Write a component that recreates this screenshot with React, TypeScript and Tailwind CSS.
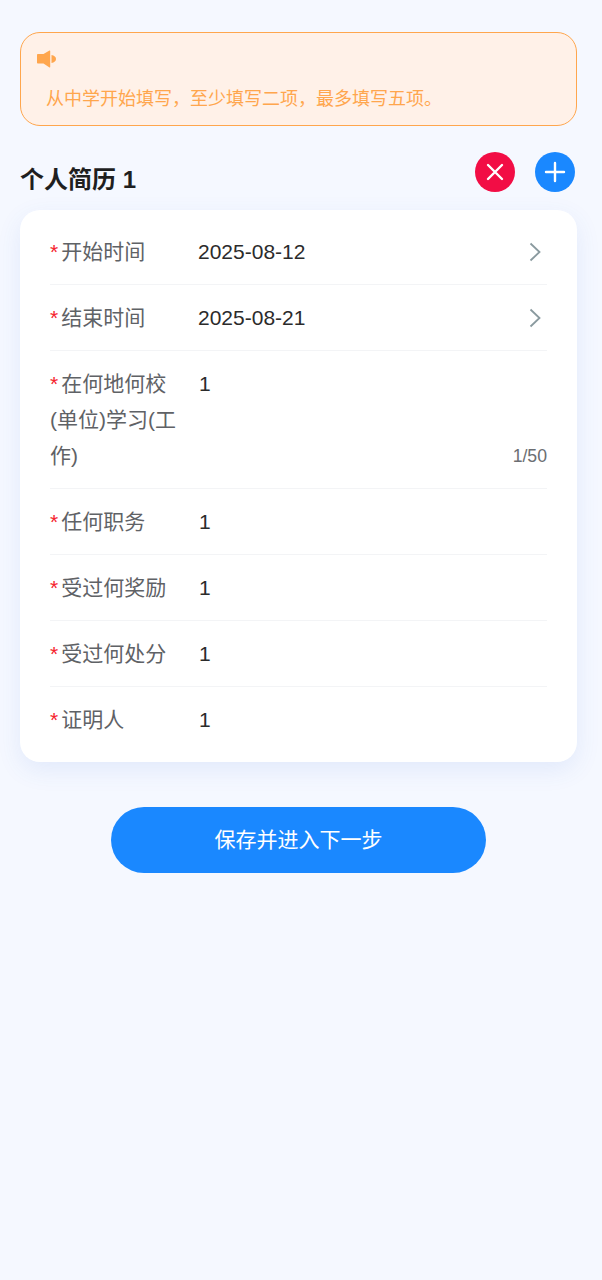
type Field = {
  label: string;
  value: string;
  arrow?: boolean;
  counter?: string;
};

const fields: Field[] = [
  { label: "开始时间", value: "2025-08-12", arrow: true },
  { label: "结束时间", value: "2025-08-21", arrow: true },
  { label: "在何地何校(单位)学习(工作)", value: "1", counter: "1/50" },
  { label: "任何职务", value: "1" },
  { label: "受过何奖励", value: "1" },
  { label: "受过何处分", value: "1" },
  { label: "证明人", value: "1" },
];

const fontStack = "font-['Liberation_Sans','Noto_Sans_CJK_SC',sans-serif]";

function FieldRow({ field, last }: { field: Field; last: boolean }) {
  return (
    <div className={`flex pt-[15px] ${last ? "pb-[15px]" : "border-b border-[#f3f4f6] pb-[14px]"}`}>
      <div className="w-[148px] shrink-0 pr-[18px] text-[21px] leading-[36px] text-[#5f6266]">
        <span className="mr-[3px] text-[#f5222d]">*</span>
        {field.label}
      </div>
      <div className="relative flex min-w-0 flex-1 items-start justify-between pl-[1px] text-[21px] leading-[36px] text-[#2b2b2b]">
        <span className={field.arrow ? "-ml-[1px]" : ""}>{field.value}</span>
        {field.arrow && (
          <svg width="12" height="20" viewBox="0 0 12 20" fill="none" className="mt-[8px] mr-[6px] text-[#8a9a9f]">
            <path d="M1.500 1.500L10.500 10L1.500 18.500" stroke="currentColor" strokeWidth="1.800" />
          </svg>
        )}
        {field.counter && (
          <span className="absolute right-0 bottom-0 text-[17.66px] text-[#6b6e72]">{field.counter}</span>
        )}
      </div>
    </div>
  );
}

export default function App() {
  return (
    <div className={`min-h-[1280px] bg-[#f5f8ff] px-[20px] pt-[32px] pr-[25px] ${fontStack}`}>
      {/* Notice */}
      <div className="h-[94px] rounded-[20px] border border-[#ffa64d] bg-[#fff1e8] pt-[8px] pl-[16px]">
        <svg width="20" height="20" viewBox="0 0 20 20" className="mt-[9px]">
          <path d="M1 4h5.500L12.500 0.500c.4-.2.7 0 .7.4v16.200c0 .4-.3.6-.7.4L6.500 13.500H1c-.5 0-1-.4-1-1V5c0-.6.5-1 1-1z" fill="#ffa64d" />
          <path d="M14.500 5c2.800.4 4.500 2 4.500 4s-1.700 3.600-4.500 4z" fill="#ffa64d" />
        </svg>
        <p className="mt-[15px] pl-[9px] text-[18px] leading-[28px] text-[#ffa64d]">
          从中学开始填写，至少填写二项，最多填写五项。
        </p>
      </div>

      {/* Section heading */}
      <div className="mt-[26px] flex h-[52px] items-start justify-between">
        <h2 className="mt-[12px] text-[24px] leading-[32px] font-bold text-[#1f1f1f]">个人简历 1</h2>
        <div className="mr-[2.4px] flex gap-[20px]">
          <button className="flex h-[40px] w-[40px] items-center justify-center rounded-full bg-[#f20d45]">
            <svg width="20" height="20" viewBox="0 0 20 20" stroke="#fff" strokeWidth="2.400" strokeLinecap="round">
              <path d="M3 3l14 14M17 3L3 17" />
            </svg>
          </button>
          <button className="flex h-[40px] w-[40px] items-center justify-center rounded-full bg-[#1a88ff]">
            <svg width="22" height="22" viewBox="0 0 22 22" stroke="#fff" strokeWidth="2.400" strokeLinecap="round">
              <path d="M2 11h18M11 2v18" />
            </svg>
          </button>
        </div>
      </div>

      {/* Form card */}
      <div className="mt-[6px] rounded-[20px] bg-white px-[30px] py-[9px] shadow-[0_8px_24px_rgba(60,110,220,0.1)]">
        {fields.map((field, i) => (
          <FieldRow key={field.label} field={field} last={i === fields.length - 1} />
        ))}
      </div>

      <div className="mt-[45px] flex justify-center">
        <button className="h-[66px] w-[375px] rounded-full bg-[#1a88ff] text-[21px] text-white">
          保存并进入下一步
        </button>
      </div>
    </div>
  );
}
